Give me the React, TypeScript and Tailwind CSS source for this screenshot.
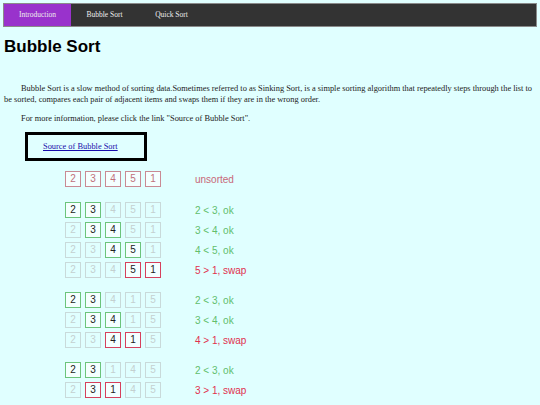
type Cell = { v: number; s: 'u' | 'g' | 'r' | 'o' };
type Row = { cells: Cell[]; label: string; tone: 'u' | 'g' | 'r' };

const mk = (vals: number[], hl: number[], s: 'u' | 'g' | 'r'): Cell[] =>
  vals.map((v, i) => ({ v, s: s === 'u' || hl.includes(i) ? s : 'o' }));

const groups: Row[][] = [
  [{ cells: mk([2, 3, 4, 5, 1], [], 'u'), label: 'unsorted', tone: 'u' }],
  [
    { cells: mk([2, 3, 4, 5, 1], [0, 1], 'g'), label: '2 < 3, ok', tone: 'g' },
    { cells: mk([2, 3, 4, 5, 1], [1, 2], 'g'), label: '3 < 4, ok', tone: 'g' },
    { cells: mk([2, 3, 4, 5, 1], [2, 3], 'g'), label: '4 < 5, ok', tone: 'g' },
    { cells: mk([2, 3, 4, 5, 1], [3, 4], 'r'), label: '5 > 1, swap', tone: 'r' },
  ],
  [
    { cells: mk([2, 3, 4, 1, 5], [0, 1], 'g'), label: '2 < 3, ok', tone: 'g' },
    { cells: mk([2, 3, 4, 1, 5], [1, 2], 'g'), label: '3 < 4, ok', tone: 'g' },
    { cells: mk([2, 3, 4, 1, 5], [2, 3], 'r'), label: '4 > 1, swap', tone: 'r' },
  ],
  [
    { cells: mk([2, 3, 1, 4, 5], [0, 1], 'g'), label: '2 < 3, ok', tone: 'g' },
    { cells: mk([2, 3, 1, 4, 5], [1, 2], 'r'), label: '3 > 1, swap', tone: 'r' },
  ],
];

const cellStyle = {
  u: 'border-[#c98a94] text-[#c0707c] bg-[#f4ffff]',
  g: 'border-[#6cc47c] text-[#222] bg-[#f4ffff]',
  r: 'border-[#d6405c] text-[#222] bg-[#f4ffff]',
  o: 'border-[#c9dada] text-[#c4d0d0]',
};

const labelStyle = {
  u: 'text-[#c86878]',
  g: 'text-[#62be6c]',
  r: 'text-[#e0304e]',
};

const App = () => {
  return (
    <div className="w-[540px] h-[405px] overflow-hidden bg-[#e0ffff] pt-[3px]">
      {/* nav */}
      <nav className="mx-[3px] h-[24px] flex bg-[#333] border border-[#8a8a8a] font-['Liberation_Serif',serif] text-[7.5px] text-[#eee]">
        <div className="w-[67px] flex items-center justify-center bg-[#9932cc]">Introduction</div>
        <div className="w-[67px] flex items-center justify-center">Bubble Sort</div>
        <div className="w-[67px] flex items-center justify-center">Quick Sort</div>
      </nav>

      <h1 className="mt-[10px] px-[4px] font-['Liberation_Sans',sans-serif] font-bold text-[17px] leading-[20px] text-black">
        Bubble Sort
      </h1>

      <div className="px-[4px] font-['Liberation_Serif',serif] text-[8.4px] leading-[11px] text-[#222]">
        <p className="mt-[26px] indent-[17px]">
          Bubble Sort is a slow method of sorting data.Sometimes referred to as Sinking Sort, is a simple sorting algorithm that repeatedly steps through the list to be sorted, compares each pair of adjacent items and swaps them if they are in the wrong order.
        </p>
        <p className="mt-[8px] indent-[17px]">
          For more information, please click the link "Source of Bubble Sort".
        </p>
        <div className="mt-[8px] ml-[21px] w-[122px] h-[29px] border-[3px] border-black flex items-center pl-[15px]">
          <a href="#" className="text-[#1a0dab] underline">Source of Bubble Sort</a>
        </div>
      </div>

      {/* steps */}
      <div className="mt-[10px] flex flex-col gap-[14px] font-['Liberation_Sans',sans-serif]">
        {groups.map((group, gi) => (
          <div key={gi} className={`flex flex-col gap-[4px] ${gi === 0 ? 'mb-[1px]' : ''}`}>
            {group.map((row, ri) => (
              <div key={ri} className="flex items-center h-[16px]">
                <div className="ml-[65px] w-[130px] flex gap-[4px]">
                  {row.cells.map((c, ci) => (
                    <div
                      key={ci}
                      className={`w-[16px] h-[16px] border flex items-center justify-center text-[10px] leading-none ${cellStyle[c.s]}`}
                    >
                      {c.v}
                    </div>
                  ))}
                </div>
                <span className={`text-[10px] ${labelStyle[row.tone]}`}>{row.label}</span>
              </div>
            ))}
          </div>
        ))}
      </div>
    </div>
  );
};

export default App;
